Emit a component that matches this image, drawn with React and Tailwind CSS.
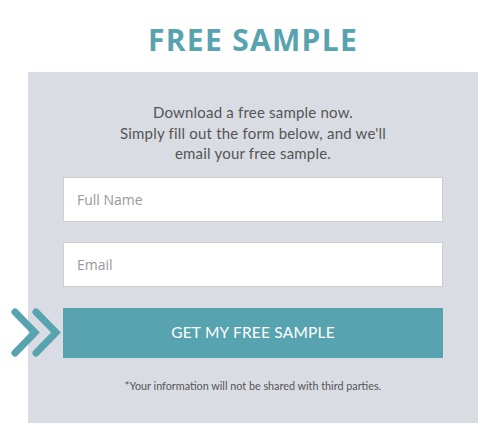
import React from "react";

export default function App() {
  return (
    <div className="w-[485px] h-[429px] bg-white overflow-hidden">
      <h1 className="pl-[21px] pt-[20px] h-[72px] text-center text-[30px] leading-[40px] font-bold tracking-[1.3px] text-[#58a3b0] font-['Open_Sans',sans-serif]">
        FREE SAMPLE
      </h1>

      <div className="ml-[28px] w-[450px] h-[351px] bg-[#d9dce3] pt-[30px] font-['Lato',sans-serif]">
        <p className="text-center text-[15px] leading-[20.5px] tracking-[0.2px] text-[#555555]">
          Download a free sample now.
          <br />
          Simply fill out the form below, and we'll
          <br />
          email your free sample.
        </p>

        <div className="relative ml-[35px] w-[380px] mt-[13px] flex flex-col">
          <input
            placeholder="Full Name"
            className="h-[45px] bg-white border border-[#cfcfcf] px-[13px] text-[14px] text-[#555] placeholder:text-[#999] font-['Open_Sans',sans-serif] outline-none"
          />
          <input
            placeholder="Email"
            className="mt-[20px] h-[45px] bg-white border border-[#cfcfcf] px-[13px] text-[14px] text-[#555] placeholder:text-[#999] font-['Open_Sans',sans-serif] outline-none"
          />
          <button className="mt-[21px] h-[50px] bg-[#58a3b0] text-white text-[15.5px] tracking-[0.2px] font-['Lato',sans-serif]">
            GET MY FREE SAMPLE
          </button>

          {/* arrows sitting just left of the button */}
          <svg
            className="absolute left-[-53px] top-[130px]"
            width="52"
            height="52"
            viewBox="0 0 52 52"
            fill="none"
            stroke="#58a3b0"
            strokeWidth="7"
            strokeLinecap="round"
            strokeLinejoin="miter"
          >
            <path d="M5 5 L25 25.5 L5 46" />
            <path d="M26 5 L46 25.5 L26 46" />
          </svg>
        </div>

        <p className="mt-[20px] text-center text-[10.8px] text-[#555555]">
          *Your information will not be shared with third parties.
        </p>
      </div>
    </div>
  );
}
